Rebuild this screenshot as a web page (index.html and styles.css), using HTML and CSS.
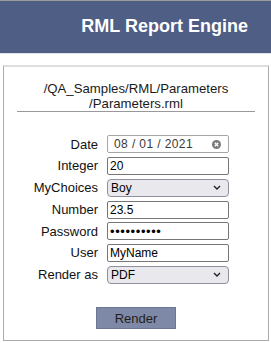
FILE: index.html
```html
<!DOCTYPE html>
<html lang="en">
  <head>
    <meta charset="UTF-8" />
    <meta name="viewport" content="width=device-width, initial-scale=1.0" />
    <title>RML Report Engine</title>
    <link rel="stylesheet" href="styles.css">
  </head>
  <body>
    <div id="header">RML Report Engine</div>

    <div id="panel">
      <div class="path">/QA_Samples/RML/Parameters<br>/Parameters.rml</div>
      <hr>

      <form id="params">
        <label>Date</label>
        <div class="field date">
          <span>08 / 01 / 2021</span>
          <svg class="clear" width="9" height="9" viewBox="0 0 9 9">
            <circle cx="4.5" cy="4.5" r="4.5" fill="#7a7a7a" />
            <path d="M2.8 2.8 L6.2 6.2 M6.2 2.8 L2.8 6.2" stroke="#fff" stroke-width="1.3" />
          </svg>
        </div>

        <label>Integer</label>
        <input class="field" type="text" value="20" />

        <label>MyChoices</label>
        <div class="pick">
          <select class="field">
            <option>Boy</option>
            <option>Girl</option>
          </select>
          <svg class="chev" width="8" height="5" viewBox="0 0 8 5">
            <path d="M1 1 L4 4 L7 1" fill="none" stroke="#222" stroke-width="1.4" />
          </svg>
        </div>

        <label>Number</label>
        <input class="field" type="text" value="23.5" />

        <label>Password</label>
        <input class="field secret" type="password" value="secretpass" />

        <label>User</label>
        <input class="field" type="text" value="MyName" />

        <label>Render as</label>
        <div class="pick">
          <select class="field">
            <option>PDF</option>
            <option>HTML</option>
          </select>
          <svg class="chev" width="8" height="5" viewBox="0 0 8 5">
            <path d="M1 1 L4 4 L7 1" fill="none" stroke="#222" stroke-width="1.4" />
          </svg>
        </div>
      </form>

      <div class="actions">
        <button type="button" id="render">Render</button>
      </div>
    </div>
  </body>
</html>
```

FILE: styles.css
```css
* {
  box-sizing: border-box;
}

body {
  margin: 0;
  background: #fff;
  font-family: "Liberation Sans", Arial, sans-serif;
  color: #111;
}

#header {
  height: 54px;
  border-top: 1px solid #9a9a9a;
  border-bottom: 1px solid #dfe2e8;
  background: #4e5e84;
  color: #fff;
  font-size: 18px;
  font-weight: bold;
  display: flex;
  align-items: center;
  justify-content: flex-end;
  padding: 0 23px 1px 0;
}

#panel {
  margin: 11px 2px 0 3px;
  height: 276px;
  border: 1px solid #ababab;
  border-top: 2px solid #dedede;
  padding-top: 14px;
}

.path {
  font-size: 13.2px;
  line-height: 15px;
  text-align: center;
  color: #1a1a1a;
}

hr {
  margin: 0 13px;
  border: none;
  border-top: 1px solid #999;
}

#params {
  display: grid;
  grid-template-columns: 94px 122px;
  column-gap: 9px;
  row-gap: 3.5px;
  margin-top: 23px;
  align-items: center;
}

#params label {
  text-align: right;
  font-size: 13px;
  color: #111;
}

.field {
  height: 18px;
  width: 100%;
  margin: 0;
  padding: 0 0 0 2px;
  border: 1px solid #767676;
  border-radius: 2px;
  background: #fff;
  font-family: "Liberation Sans", Arial, sans-serif;
  font-size: 12px;
  color: #000;
  outline: none;
}

.secret {
  font-size: 13px;
  letter-spacing: 0.6px;
}

.date {
  display: flex;
  align-items: center;
  justify-content: space-between;
  border-color: #a6a6a6;
  padding: 0 7px 0 6px;
  color: #3a3a3a;
  letter-spacing: 0.4px;
}

.pick {
  position: relative;
}

select.field {
  appearance: none;
  background: #e9e9ed;
  border-color: #8f8f9d;
  border-radius: 4px;
  padding-left: 3px;
}

.chev {
  position: absolute;
  right: 8px;
  top: 7px;
  pointer-events: none;
}

.actions {
  display: flex;
  justify-content: center;
  margin-top: 23px;
}

#render {
  width: 80px;
  height: 22px;
  border: 1px solid #6c7794;
  background: #7e89a7;
  color: #1e1e1e;
  font-family: "Liberation Sans", Arial, sans-serif;
  font-size: 13px;
  padding: 0;
  cursor: pointer;
}
```
